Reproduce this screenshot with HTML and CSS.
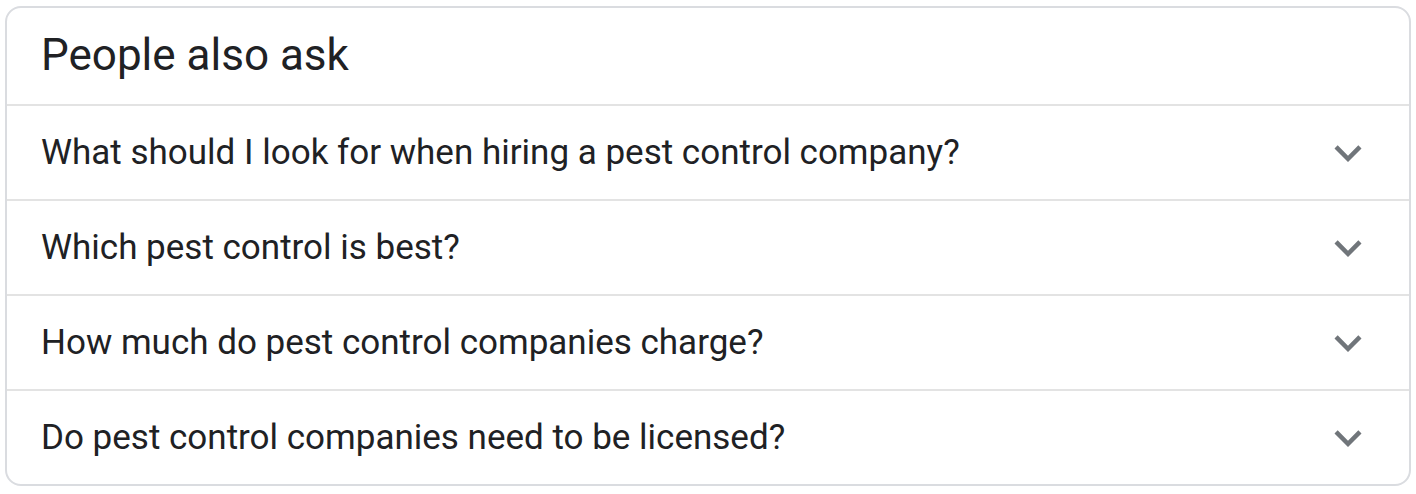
FILE: index.html
```html
<!DOCTYPE html>
<html lang="en">
<head>
    <meta charset="UTF-8">
    <meta name="viewport" content="width=device-width, initial-scale=1.0">
    <title>People also ask</title>
    <link rel="stylesheet" href="styles.css">
</head>
<body>
    <div class="card">
        <div class="card-header">
            <h2>People also ask</h2>
        </div>
        <div class="question">
            <span>What should I look for when hiring a pest control company?</span>
            <svg class="chevron" viewBox="0 0 24 24"><path d="M16.59 8.59L12 13.17 7.41 8.59 6 10l6 6 6-6z"/></svg>
        </div>
        <div class="question">
            <span>Which pest control is best?</span>
            <svg class="chevron" viewBox="0 0 24 24"><path d="M16.59 8.59L12 13.17 7.41 8.59 6 10l6 6 6-6z"/></svg>
        </div>
        <div class="question">
            <span>How much do pest control companies charge?</span>
            <svg class="chevron" viewBox="0 0 24 24"><path d="M16.59 8.59L12 13.17 7.41 8.59 6 10l6 6 6-6z"/></svg>
        </div>
        <div class="question">
            <span>Do pest control companies need to be licensed?</span>
            <svg class="chevron" viewBox="0 0 24 24"><path d="M16.59 8.59L12 13.17 7.41 8.59 6 10l6 6 6-6z"/></svg>
        </div>
    </div>
</body>
</html>
```

FILE: styles.css
```css
body {
    font-family: Roboto, Arial, sans-serif;
    background-color: #fff;
    color: #202124;
    margin: 0;
    padding: 6px 5px;
}
.card {
    border: 2px solid #dadce0;
    border-radius: 16px;
    overflow: hidden;
}
.card-header {
    height: 96px;
    padding: 0 34px;
    display: flex;
    align-items: center;
    border-bottom: 2px solid #e3e3e3;
}
.card-header h2 {
    margin: 0;
    font-size: 44px;
    font-weight: 400;
    line-height: 52px;
    margin-top: -2px;
}
.question {
    display: flex;
    align-items: center;
    justify-content: space-between;
    height: 93px;
    padding: 0 34px 0 34px;
    font-size: 35px;
    line-height: 44px;
    border-bottom: 2px solid #e3e3e3;
}
.question:last-child {
    border-bottom: none;
}
.chevron {
    width: 54px;
    height: 54px;
    fill: #70757a;
}
```
